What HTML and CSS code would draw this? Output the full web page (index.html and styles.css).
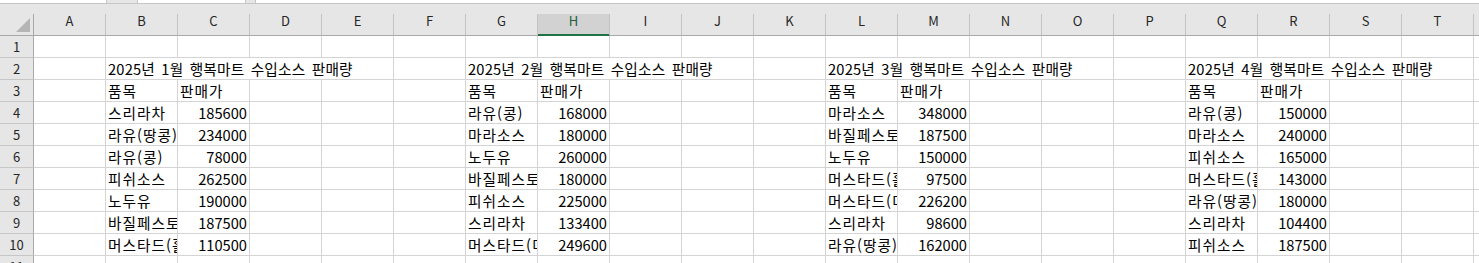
FILE: index.html
```html
<!DOCTYPE html>
<html lang="ko">
<head>
<meta charset="utf-8">
<title>판매량</title>
<link rel="stylesheet" href="styles.css">
</head>
<body>
<div class="app">
  <div class="fbar">
    <div class="fbox namebox"></div>
    <div class="fgap"></div>
    <div class="fbox btns"></div>
    <div class="fgap small"></div>
    <div class="fbox input"></div>
  </div>
  <div class="sheet">
    <div class="corner"><svg width="34" height="22" viewBox="0 0 34 22"><polygon points="30,4 30,18 16,18" fill="#b5b5b5"/></svg></div>
    <div class="ch">A</div><div class="ch">B</div><div class="ch">C</div><div class="ch">D</div><div class="ch">E</div><div class="ch">F</div><div class="ch">G</div><div class="ch sel">H</div><div class="ch">I</div><div class="ch">J</div><div class="ch">K</div><div class="ch">L</div><div class="ch">M</div><div class="ch">N</div><div class="ch">O</div><div class="ch">P</div><div class="ch">Q</div><div class="ch">R</div><div class="ch">S</div><div class="ch">T</div><div class="ch">U</div>

    <div class="rh">1</div>
    <div class="c"></div><div class="c"></div><div class="c"></div><div class="c"></div><div class="c"></div><div class="c"></div><div class="c"></div><div class="c"></div><div class="c"></div><div class="c"></div><div class="c"></div><div class="c"></div><div class="c"></div><div class="c"></div><div class="c"></div><div class="c"></div><div class="c"></div><div class="c"></div><div class="c"></div><div class="c"></div><div class="c"></div>

    <div class="rh">2</div>
    <div class="c"></div><div class="c ti">2025년 1월 행복마트 수입소스 판매량</div><div class="c"></div><div class="c ti">2025년 2월 행복마트 수입소스 판매량</div><div class="c"></div><div class="c ti">2025년 3월 행복마트 수입소스 판매량</div><div class="c"></div><div class="c ti">2025년 4월 행복마트 수입소스 판매량</div><div class="c"></div>

    <div class="rh">3</div>
    <div class="c"></div><div class="c t">품목</div><div class="c t">판매가</div><div class="c"></div><div class="c"></div><div class="c"></div><div class="c t">품목</div><div class="c t">판매가</div><div class="c"></div><div class="c"></div><div class="c"></div><div class="c t">품목</div><div class="c t">판매가</div><div class="c"></div><div class="c"></div><div class="c"></div><div class="c t">품목</div><div class="c t">판매가</div><div class="c"></div><div class="c"></div><div class="c"></div>

    <div class="rh">4</div>
    <div class="c"></div><div class="c t">스리라차</div><div class="c n">185600</div><div class="c"></div><div class="c"></div><div class="c"></div><div class="c t">라유(콩)</div><div class="c n">168000</div><div class="c"></div><div class="c"></div><div class="c"></div><div class="c t">마라소스</div><div class="c n">348000</div><div class="c"></div><div class="c"></div><div class="c"></div><div class="c t">라유(콩)</div><div class="c n">150000</div><div class="c"></div><div class="c"></div><div class="c"></div>

    <div class="rh">5</div>
    <div class="c"></div><div class="c t">라유(땅콩)</div><div class="c n">234000</div><div class="c"></div><div class="c"></div><div class="c"></div><div class="c t">마라소스</div><div class="c n">180000</div><div class="c"></div><div class="c"></div><div class="c"></div><div class="c t">바질페스토</div><div class="c n">187500</div><div class="c"></div><div class="c"></div><div class="c"></div><div class="c t">마라소스</div><div class="c n">240000</div><div class="c"></div><div class="c"></div><div class="c"></div>

    <div class="rh">6</div>
    <div class="c"></div><div class="c t">라유(콩)</div><div class="c n">78000</div><div class="c"></div><div class="c"></div><div class="c"></div><div class="c t">노두유</div><div class="c n">260000</div><div class="c"></div><div class="c"></div><div class="c"></div><div class="c t">노두유</div><div class="c n">150000</div><div class="c"></div><div class="c"></div><div class="c"></div><div class="c t">피쉬소스</div><div class="c n">165000</div><div class="c"></div><div class="c"></div><div class="c"></div>

    <div class="rh">7</div>
    <div class="c"></div><div class="c t">피쉬소스</div><div class="c n">262500</div><div class="c"></div><div class="c"></div><div class="c"></div><div class="c t">바질페스토</div><div class="c n">180000</div><div class="c"></div><div class="c"></div><div class="c"></div><div class="c t">머스타드(홀그레인)</div><div class="c n">97500</div><div class="c"></div><div class="c"></div><div class="c"></div><div class="c t">머스타드(홀그레인)</div><div class="c n">143000</div><div class="c"></div><div class="c"></div><div class="c"></div>

    <div class="rh">8</div>
    <div class="c"></div><div class="c t">노두유</div><div class="c n">190000</div><div class="c"></div><div class="c"></div><div class="c"></div><div class="c t">피쉬소스</div><div class="c n">225000</div><div class="c"></div><div class="c"></div><div class="c"></div><div class="c t">머스타드(디종)</div><div class="c n">226200</div><div class="c"></div><div class="c"></div><div class="c"></div><div class="c t">라유(땅콩)</div><div class="c n">180000</div><div class="c"></div><div class="c"></div><div class="c"></div>

    <div class="rh">9</div>
    <div class="c"></div><div class="c t">바질페스토</div><div class="c n">187500</div><div class="c"></div><div class="c"></div><div class="c"></div><div class="c t">스리라차</div><div class="c n">133400</div><div class="c"></div><div class="c"></div><div class="c"></div><div class="c t">스리라차</div><div class="c n">98600</div><div class="c"></div><div class="c"></div><div class="c"></div><div class="c t">스리라차</div><div class="c n">104400</div><div class="c"></div><div class="c"></div><div class="c"></div>

    <div class="rh">10</div>
    <div class="c"></div><div class="c t">머스타드(홀그레인)</div><div class="c n">110500</div><div class="c"></div><div class="c"></div><div class="c"></div><div class="c t">머스타드(디종)</div><div class="c n">249600</div><div class="c"></div><div class="c"></div><div class="c"></div><div class="c t">라유(땅콩)</div><div class="c n">162000</div><div class="c"></div><div class="c"></div><div class="c"></div><div class="c t">피쉬소스</div><div class="c n">187500</div><div class="c"></div><div class="c"></div><div class="c"></div>

    <div class="rh">11</div>
    <div class="c"></div><div class="c"></div><div class="c"></div><div class="c"></div><div class="c"></div><div class="c"></div><div class="c"></div><div class="c"></div><div class="c"></div><div class="c"></div><div class="c"></div><div class="c"></div><div class="c"></div><div class="c"></div><div class="c"></div><div class="c"></div><div class="c"></div><div class="c"></div><div class="c"></div><div class="c"></div><div class="c"></div>
  </div>
</div>
</body>
</html>
```

FILE: styles.css
```css
html, body {
  margin: 0;
  padding: 0;
  background: #ffffff;
  overflow: hidden;
}

.app {
  width: 1479px;
  height: 263px;
  overflow: hidden;
  background: #e6e6e6;
  font-family: "Noto Sans CJK KR", "Noto Sans", sans-serif;
}

.fbar {
  display: flex;
  height: 14px;
  box-sizing: border-box;
}

.fbox {
  height: 4px;
  box-sizing: border-box;
  background: #ffffff;
  border-bottom: 1px solid #c6c6c6;
}

.namebox {
  width: 107px;
  border-right: 1px solid #c6c6c6;
}

.fgap {
  width: 30px;
  height: 4px;
  box-sizing: border-box;
  border-bottom: 1px solid #c6c6c6;
}

.fgap.small {
  width: 9px;
}

.btns {
  width: 109px;
  border-left: 1px solid #c6c6c6;
  border-right: 1px solid #c6c6c6;
}

.input {
  flex: 1;
  border-left: 1px solid #c6c6c6;
}

.sheet {
  display: grid;
  grid-template-columns: 34px repeat(21, 72px);
  grid-auto-rows: 22px;
  width: max-content;
}

.corner {
  box-sizing: border-box;
  border-right: 1px solid #a9a9a9;
  border-bottom: 1px solid #a9a9a9;
  background: #e6e6e6;
}

.corner svg {
  display: block;
}

.ch {
  box-sizing: border-box;
  background: #e6e6e6;
  border-right: 1px solid #c3c3c3;
  border-bottom: 1px solid #a9a9a9;
  text-align: center;
  font-size: 13px;
  line-height: 14px;
  color: #262626;
}

.ch.sel {
  background: #d2d2d2;
  color: #1f5f3b;
  border-bottom-color: #217346;
  box-shadow: inset 0 -1px 0 #217346;
}

.rh {
  box-sizing: border-box;
  background: #e6e6e6;
  border-right: 1px solid #a9a9a9;
  border-bottom: 1px solid #c6c6c6;
  text-align: center;
  font-size: 13px;
  line-height: 21px;
  color: #262626;
}

.c {
  box-sizing: border-box;
  background: #ffffff;
  border-right: 1px solid #d4d4d4;
  border-bottom: 1px solid #d4d4d4;
  font-size: 14.67px;
  line-height: 21px;
  color: #000000;
  white-space: nowrap;
  overflow: hidden;
}

.t {
  padding-left: 2px;
  letter-spacing: 1px;
}

.n {
  text-align: right;
  padding-right: 2px;
}

.ti {
  grid-column: span 4;
  padding-left: 2px;
  word-spacing: 2px;
  letter-spacing: 0.2px;
}
```
